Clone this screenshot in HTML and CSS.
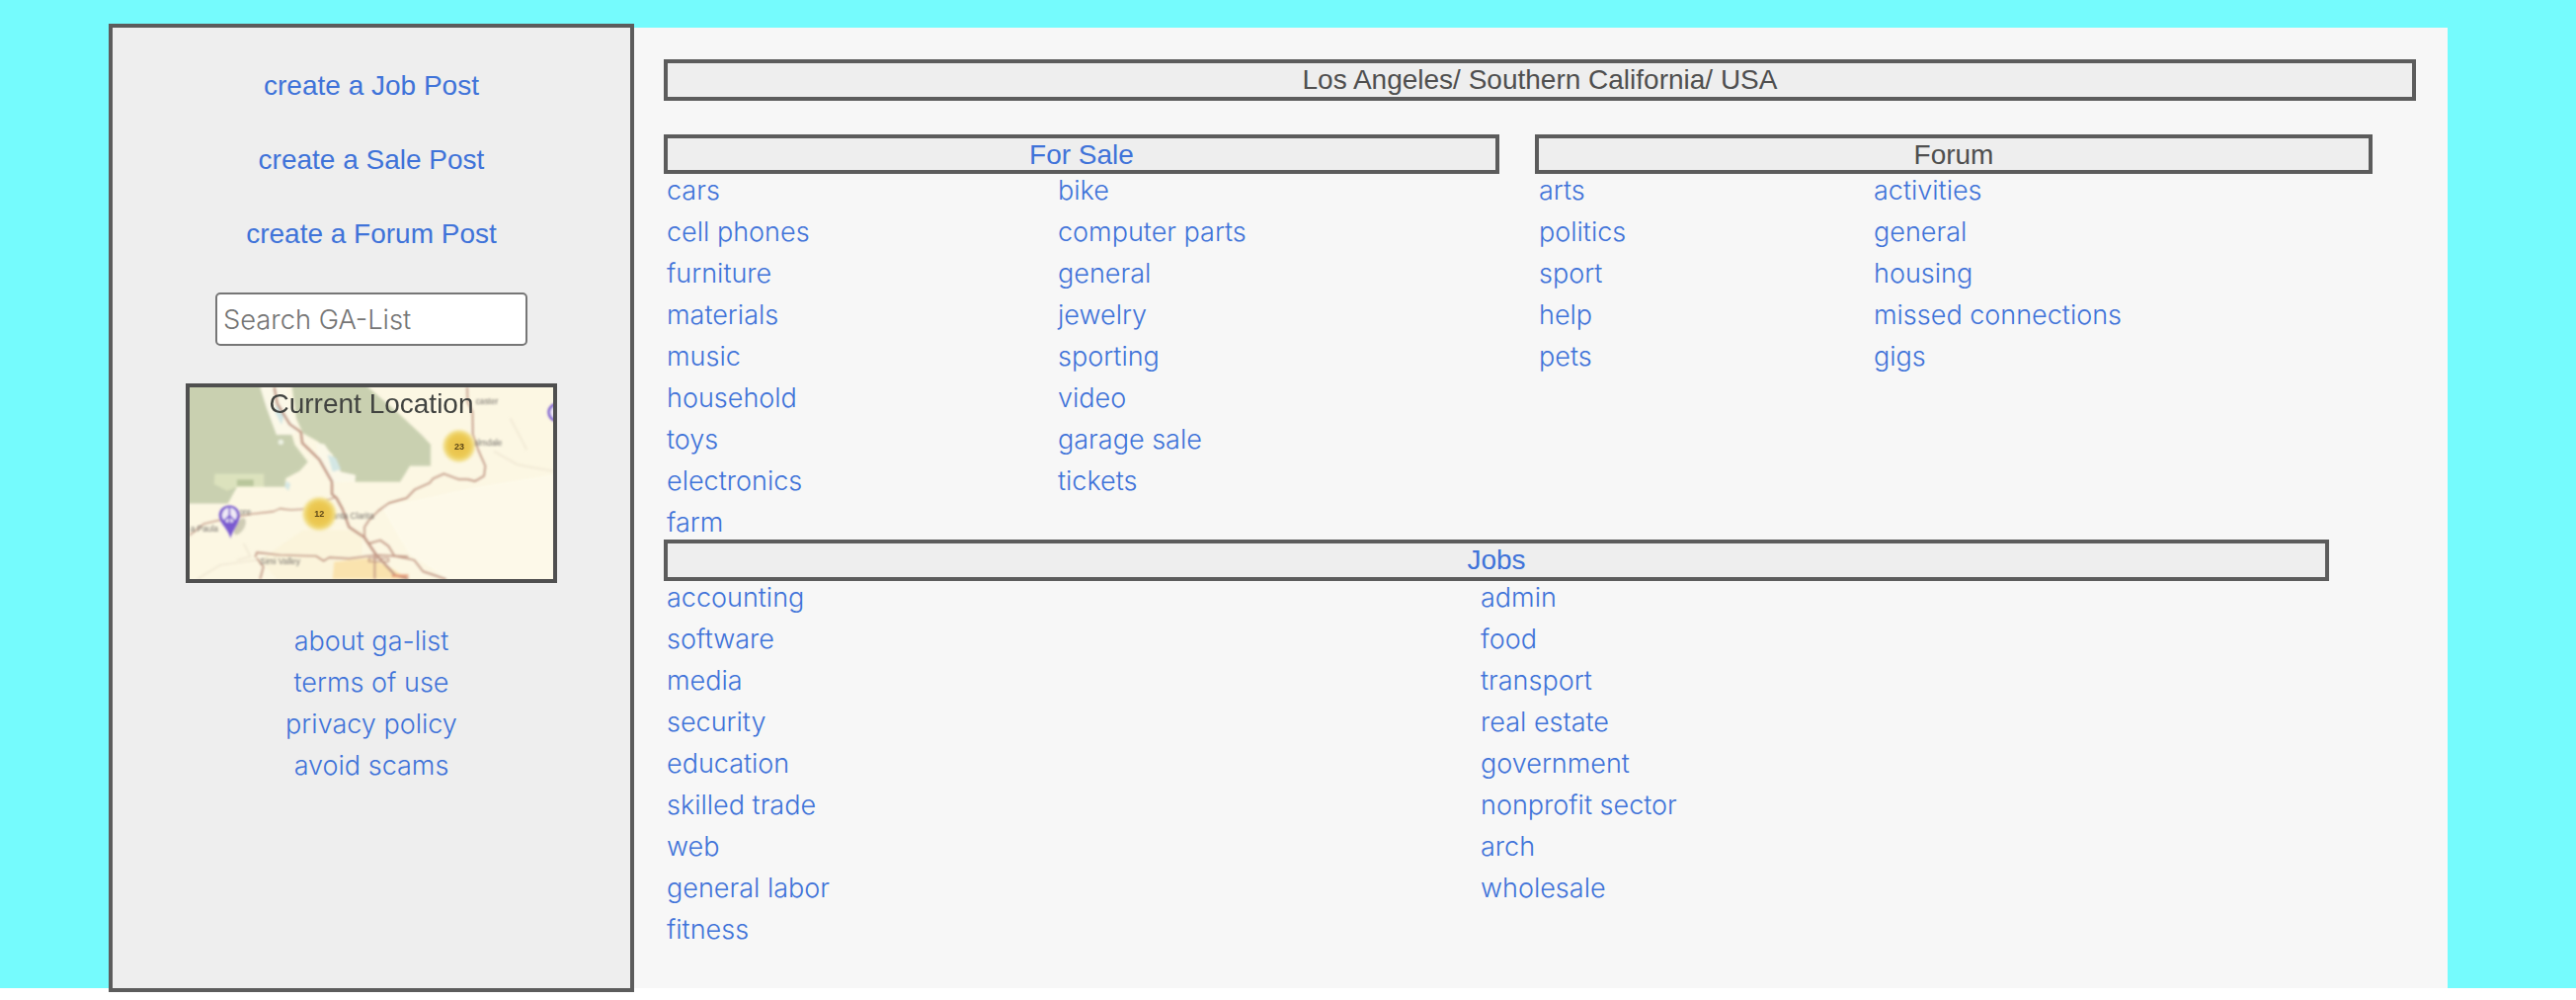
FILE: index.html
```html
<!DOCTYPE html>
<html lang="en">
<head>
<meta charset="utf-8">
<title>GA-List</title>
<link rel="stylesheet" href="styles.css">
</head>
<body>
<div class="page">
  <aside class="sidebar">
    <nav class="create">
      <a href="#">create a Job Post</a>
      <a href="#">create a Sale Post</a>
      <a href="#">create a Forum Post</a>
    </nav>
    <input class="search" type="text" placeholder="Search GA-List">
    <section class="map">
      <svg class="map-art" viewBox="36 36 1104 582" preserveAspectRatio="none" aria-hidden="true">
        <defs>
          <filter id="soft"><feGaussianBlur stdDeviation="2.6"/></filter>
          <radialGradient id="cluster">
            <stop offset="0" stop-color="#e8bf48"/>
            <stop offset=".6" stop-color="#ecca54"/>
            <stop offset=".8" stop-color="#efd774" stop-opacity=".9"/>
            <stop offset="1" stop-color="#f5e6a0" stop-opacity="0"/>
          </radialGradient>
        </defs>
        <rect x="36" y="36" width="1104" height="582" fill="#fcf7e3"/>
        <g filter="url(#soft)">
          <path fill="#fdf9e9" d="M620 400L900 340L1140 300V618H820L700 540Z"/>
          <path fill="#faf1d6" d="M380 470H560V560H480V618H300L250 560Z" opacity=".6"/>
          <path fill="#fae3ae" d="M475 565L580 555L640 580L700 618H470Z"/>
          <path fill="#c9d0b0" d="M20 20H250L272 95L300 180L345 176L355 210L395 262L370 290L328 312L325 338H180L152 388H20Z"/>
          <path fill="#c9d0b0" d="M345 20H560L665 110L740 180L768 210V274H705L675 323H538L535 302L490 297L470 240L425 200L380 175L360 130Z"/>
          <path fill="#dce2bd" d="M112 298H262V338H180L150 350L110 330Z"/>
          <path fill="#b9c69b" d="M180 316H230V336H180Z"/>
          <path fill="#fbf8e8" d="M250 36H330L345 110L365 170L345 180L300 180L270 100Z"/>
          <path fill="#fbf8e8" d="M420 205L445 208L470 245L495 292L540 302L538 323L470 325L430 262Z"/>
          <path fill="#d3e6e4" d="M455 240L480 250L495 285L470 292ZM300 80L322 120L315 150L296 112ZM330 320L342 330L336 350L325 338Z"/>
          <circle cx="313" cy="202" r="8" fill="#eef2e4"/>
          <g fill="none" stroke="#f0e8d4" stroke-width="5">
            <path d="M1010 130L1060 225M960 230L1030 270L1140 290M60 618L130 575L240 560M200 510L220 550L180 560"/>
          </g>
          <g fill="none" stroke="#bf9482" stroke-width="8" stroke-linejoin="round">
            <path d="M293 36L302 85L340 148L374 172L378 205L430 255L468 322L468 360L482 372L500 405L520 460L565 490L603 545L660 606L700 618" stroke-width="7"/>
            <path d="M879 36L880 80L895 110L896 180L912 225L934 275L930 305L903 321L880 315L852 315L808 298L775 313L765 326L720 346L695 372L642 387L610 410L580 440L567 460L567 490L580 510L615 500L640 518L658 548L718 560L745 595L815 618" stroke-width="5"/>
            <path d="M36 485L80 450L130 438L225 420L290 413L310 404L345 408L385 405" stroke-width="4"/>
            <path d="M235 552L240 537L310 545L420 548L443 563L460 552L520 556L603 545L700 550M598 545V618M240 555L260 580L250 618" stroke-width="5"/>
            <path d="M450 380L482 368M580 555H640V565H580Z" stroke-width="4"/>
            <path d="M650 608H700" stroke="#e59b78" stroke-width="8"/>
          </g>
          <ellipse cx="188" cy="458" rx="14" ry="28" transform="rotate(30 188 458)" fill="#8d8b72" opacity=".4"/>
        </g>
        <g class="place" filter="url(#soft)">
          <text x="905" y="88">caster</text>
          <text x="898" y="212">almdale</text>
          <text x="468" y="434">anta Clarita</text>
          <text x="38" y="475">a Paula</text>
          <text x="250" y="573">Simi Valley</text>
          <text x="186" y="423">ore</text>
        </g>
        <g filter="url(#soft)">
          <circle cx="854" cy="214" r="54" fill="url(#cluster)"/>
          <circle cx="430" cy="420" r="56" fill="url(#cluster)"/>
          <path d="M125 426C125 384 188 384 188 426C186 450 168 468 160 494C154 468 128 450 125 426Z" fill="#7a5ad0"/>
          <circle cx="157" cy="424" r="23" fill="#efe9f5"/>
          <path d="M157 402V450M157 425L140 443M157 425L174 443" fill="none" stroke="#7a5ad0" stroke-width="5"/>
          <circle cx="1152" cy="112" r="25" fill="#efe9f5" stroke="#7a5ad0" stroke-width="8"/>
        </g>
        <g class="count">
          <text x="855" y="224">23</text>
          <text x="430" y="430">12</text>
        </g>
      </svg>
      <h2 class="map-title">Current Location</h2>
    </section>
    <nav class="info">
      <a href="#">about ga-list</a>
      <a href="#">terms of use</a>
      <a href="#">privacy policy</a>
      <a href="#">avoid scams</a>
    </nav>
  </aside>
  <main class="content">
    <h1 class="bar region">Los Angeles/ Southern California/ USA</h1>
    <div class="boards">
      <section class="board">
        <h2 class="bar"><a href="#">For Sale</a></h2>
        <div class="lists sale-lists">
          <ul>
            <li><a href="#">cars</a></li>
            <li><a href="#">cell phones</a></li>
            <li><a href="#">furniture</a></li>
            <li><a href="#">materials</a></li>
            <li><a href="#">music</a></li>
            <li><a href="#">household</a></li>
            <li><a href="#">toys</a></li>
            <li><a href="#">electronics</a></li>
            <li><a href="#">farm</a></li>
          </ul>
          <ul>
            <li><a href="#">bike</a></li>
            <li><a href="#">computer parts</a></li>
            <li><a href="#">general</a></li>
            <li><a href="#">jewelry</a></li>
            <li><a href="#">sporting</a></li>
            <li><a href="#">video</a></li>
            <li><a href="#">garage sale</a></li>
            <li><a href="#">tickets</a></li>
          </ul>
        </div>
      </section>
      <section class="board">
        <h2 class="bar">Forum</h2>
        <div class="lists forum-lists">
          <ul>
            <li><a href="#">arts</a></li>
            <li><a href="#">politics</a></li>
            <li><a href="#">sport</a></li>
            <li><a href="#">help</a></li>
            <li><a href="#">pets</a></li>
          </ul>
          <ul>
            <li><a href="#">activities</a></li>
            <li><a href="#">general</a></li>
            <li><a href="#">housing</a></li>
            <li><a href="#">missed connections</a></li>
            <li><a href="#">gigs</a></li>
          </ul>
        </div>
      </section>
    </div>
    <section class="jobs">
      <h2 class="bar jobs-bar"><a href="#">Jobs</a></h2>
      <div class="lists jobs-lists">
        <ul>
          <li><a href="#">accounting</a></li>
          <li><a href="#">software</a></li>
          <li><a href="#">media</a></li>
          <li><a href="#">security</a></li>
          <li><a href="#">education</a></li>
          <li><a href="#">skilled trade</a></li>
          <li><a href="#">web</a></li>
          <li><a href="#">general labor</a></li>
          <li><a href="#">fitness</a></li>
        </ul>
        <ul>
          <li><a href="#">admin</a></li>
          <li><a href="#">food</a></li>
          <li><a href="#">transport</a></li>
          <li><a href="#">real estate</a></li>
          <li><a href="#">government</a></li>
          <li><a href="#">nonprofit sector</a></li>
          <li><a href="#">arch</a></li>
          <li><a href="#">wholesale</a></li>
        </ul>
      </div>
    </section>
  </main>
</div>
</body>
</html>
```
FILE: styles.css
```css
* { box-sizing: border-box; }

html { background: #fff; }

body {
  margin: 0;
  min-height: 1012px;
  color: #4f4f4f;
  font: 400 28px/34px "Liberation Sans", Arial, sans-serif;
}

a { color: #3f73d9; text-decoration: none; }

h1, h2 { margin: 0; font: inherit; }

ul { margin: 0; padding: 0; list-style: none; }

.page {
  display: flex;
  align-items: flex-start;
  height: 1000px;
  padding: 24px 130px 0 110px;
  background: #75fbfd;
}

.sidebar {
  display: flex;
  flex: none;
  flex-direction: column;
  align-items: center;
  width: 532px;
  height: 980px;
  padding-top: 42px;
  border: 4px solid #5c5c5c;
  background: #eee;
}

.create {
  display: flex;
  flex-direction: column;
  align-items: center;
  gap: 41px;
}

.search {
  width: 316px;
  height: 54px;
  margin-top: 42px;
  padding: 2px 6px;
  border: 2px solid #767676;
  border-radius: 5px;
  background: #fff;
  font: 300 27.3px "Inter", sans-serif;
}

.search::placeholder { color: #757575; opacity: 1; }

.map {
  position: relative;
  width: 376px;
  height: 202px;
  margin-top: 38px;
  border: 4px solid #4f4f4f;
  overflow: hidden;
}

.map-art {
  position: absolute;
  inset: 0;
  width: 100%;
  height: 100%;
}

.map-title {
  position: relative;
  color: #414340;
  line-height: 33px;
  text-align: center;
}

.place { font: 25px "Liberation Sans", sans-serif; fill: #77726c; }

.count {
  font: bold 27px "Liberation Sans", sans-serif;
  fill: #5d4818;
  text-anchor: middle;
}

.info, .lists {
  font-family: "Inter", sans-serif;
  font-weight: 300;
  font-size: 27px;
}

.info {
  display: flex;
  flex-direction: column;
  align-items: center;
  gap: 8px;
  margin-top: 42px;
}

.content {
  flex: 1;
  height: 972px;
  margin-top: 4px;
  padding: 32px 32px 0 30px;
  background: #f7f7f7;
}

.bar {
  height: 40px;
  border: 4px solid #5c5c5c;
  background: #eee;
  line-height: 33px;
  text-align: center;
}

.region { height: 42px; margin-bottom: 34px; }

.boards {
  display: grid;
  grid-template-columns: 846px 848px;
  column-gap: 36px;
}

.lists { display: grid; padding-left: 3px; }

.lists ul {
  display: flex;
  flex-direction: column;
  gap: 8px;
}

.lists li { height: 34px; }

.sale-lists { grid-template-columns: 396px 1fr; }

.forum-lists { grid-template-columns: 339px 1fr; padding-left: 4px; }

.jobs { width: 1686px; }

.jobs-bar { height: 42px; }

.jobs-lists { grid-template-columns: 824px 1fr; }
```
